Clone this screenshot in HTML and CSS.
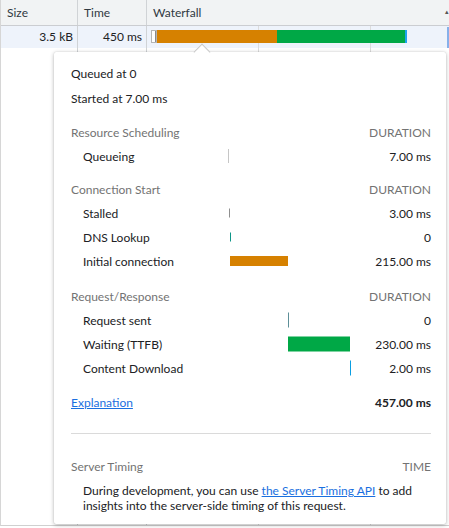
FILE: index.html
```html
<!DOCTYPE html>
<html>
<head>
<meta charset="utf-8">
<link rel="stylesheet" href="styles.css">
</head>
<body>
<div class="table">
  <div class="trow head">
    <div class="cell c-size">Size</div>
    <div class="cell c-time">Time</div>
    <div class="cell c-wf">Waterfall<span class="sort">▴</span></div>
  </div>
  <div class="trow data">
    <div class="cell c-size num">3.5 kB</div>
    <div class="cell c-time num">450 ms</div>
    <div class="cell c-wf lines">
      <div class="wf">
        <span class="wf-queue"></span>
        <span class="wf-conn"></span>
        <span class="wf-wait"></span>
        <span class="wf-dl"></span>
      </div>
      <span class="sel"></span>
    </div>
  </div>
  <div class="trow fill">
    <div class="cell c-size"></div>
    <div class="cell c-time"></div>
    <div class="cell c-wf lines"></div>
  </div>
</div>

<div class="popover">
  <span class="arrow"></span>
  <div class="meta">Queued at 0</div>
  <div class="meta">Started at 7.00 ms</div>

  <div class="timing sec">
    <div class="sh">Resource Scheduling</div><div></div><div class="sh r">DURATION</div>
    <div class="lbl">Queueing</div>
    <div class="bars"><span class="b b-queue" style="left:0;width:1px;height:14px"></span></div>
    <div class="dur">7.00 ms</div>
  </div>

  <div class="timing sec">
    <div class="sh">Connection Start</div><div></div><div class="sh r">DURATION</div>
    <div class="lbl">Stalled</div>
    <div class="bars"><span class="b b-stall" style="left:1px;width:1px;height:9px"></span></div>
    <div class="dur">3.00 ms</div>
    <div class="lbl">DNS Lookup</div>
    <div class="bars"><span class="b b-dns" style="left:2px;width:1px;height:9px"></span></div>
    <div class="dur">0</div>
    <div class="lbl">Initial connection</div>
    <div class="bars"><span class="b b-conn" style="left:2px;width:58px;height:10px"></span></div>
    <div class="dur">215.00 ms</div>
  </div>

  <div class="timing sec sec-rr">
    <div class="sh">Request/Response</div><div></div><div class="sh r">DURATION</div>
    <div class="lbl">Request sent</div>
    <div class="bars"><span class="b b-sent" style="left:60px;width:1px;height:15px"></span></div>
    <div class="dur">0</div>
    <div class="lbl">Waiting (TTFB)</div>
    <div class="bars"><span class="b b-wait" style="left:60px;width:62px;height:15px"></span></div>
    <div class="dur">230.00 ms</div>
    <div class="lbl">Content Download</div>
    <div class="bars"><span class="b b-dl" style="left:122px;width:1px;height:15px"></span></div>
    <div class="dur">2.00 ms</div>
  </div>

  <div class="total">
    <a href="#" class="link">Explanation</a>
    <span class="total-v">457.00 ms</span>
  </div>

  <div class="divider"></div>

  <div class="server">
    <div class="sh-row"><span class="sh">Server Timing</span><span class="sh">TIME</span></div>
    <p class="desc">During development, you can use <a href="#" class="link">the Server Timing API</a> to add insights into the server-side timing of this request.</p>
  </div>
</div>
</body>
</html>
```

FILE: styles.css
```css
* { box-sizing: border-box; }
html, body { margin: 0; padding: 0; }
body {
  width: 449px;
  height: 528px;
  overflow: hidden;
  font-family: Lato, "Open Sans", sans-serif;
  font-size: 12px;
  color: #202124;
  background: #fff;
  position: relative;
}
.table {
  display: flex;
  flex-direction: column;
  height: 526px;
  border-left: 1px solid #d6d6d6;
  border-bottom: 1px solid #d0d0d0;
}
.trow {
  display: grid;
  grid-template-columns: 77px 69px 1fr;
}
.cell {
  border-right: 1px solid #d0d3d6;
  white-space: nowrap;
  overflow: hidden;
}
.c-wf { border-right: none; position: relative; }
.head {
  height: 26px;
  background: #f1f3f4;
  border-bottom: 1px solid #cbcdd1;
}
.head .cell {
  line-height: 25px;
  padding-left: 6px;
  color: #303942;
}
.sort {
  position: absolute;
  right: 0;
  top: 7px;
  font-size: 7px;
  line-height: 8px;
  color: #555;
}
.data {
  height: 22px;
  background: #eef3fb;
}
.num {
  text-align: right;
  padding-right: 4px;
  line-height: 22px;
}
.fill { flex: 1; }
.lines {
  background-image:
    linear-gradient(to right, transparent 111px, #dcdcdc 111px, #dcdcdc 112px, transparent 112px),
    linear-gradient(to right, transparent 223px, #dcdcdc 223px, #dcdcdc 224px, transparent 224px);
}
.wf {
  display: flex;
  height: 13px;
  margin: 4px 0 0 4px;
}
.wf-queue {
  width: 6px;
  background: linear-gradient(to right, #fff 0 3px, #8a8a8a 3px);
  border: 1px solid #b5b5b5;
}
.wf-conn { width: 120px; background: #d68100; }
.wf-wait { width: 128px; background: #00a846; }
.wf-dl { width: 2px; background: #1ea4ec; }
.sel {
  position: absolute;
  right: 0;
  top: 1px;
  width: 2px;
  height: 21px;
  background: #86b0ea;
}

.popover {
  position: absolute;
  left: 54px;
  top: 52px;
  width: 392px;
  height: 472px;
  background: #fff;
  padding: 9px 15px 10px 17px;
  box-shadow: 0 1px 4px rgba(0,0,0,0.28), 0 0 1px rgba(0,0,0,0.2);
  border-radius: 2px;
}
.arrow {
  position: absolute;
  left: 142px;
  top: -6px;
  width: 12px;
  height: 12px;
  background: #fff;
  border-top: 1px solid #c8c8c8;
  border-left: 1px solid #c8c8c8;
  transform: rotate(45deg);
}
.meta { height: 25px; line-height: 25px; }
.timing {
  display: grid;
  grid-template-columns: 157px 123px 80px;
  grid-auto-rows: 24px;
  align-items: center;
}
.sec { margin-top: 9px; }
.sec-rr { margin-top: 11px; }
.sh { color: #737373; }
.r, .dur { text-align: right; }
.lbl { padding-left: 12px; }
.bars { position: relative; height: 24px; }
.b {
  position: absolute;
  top: 50%;
  transform: translateY(-50%);
}
.b-queue { background: #c6c6c6; }
.b-stall { background: #8f8f8f; }
.b-dns { background: #0e9688; }
.b-conn { background: #d68100; }
.b-sent { background: #5d8f98; }
.b-wait { background: #00a846; }
.b-dl { background: #0a9ee2; }
.total {
  margin-top: 10px;
  height: 24px;
  display: flex;
  justify-content: space-between;
  align-items: center;
}
.total-v { font-weight: 700; }
.link { color: #1a6fe0; text-decoration: underline; }
.divider {
  margin-top: 19px;
  height: 1px;
  background: #dadada;
}
.server { margin-top: 20px; }
.sh-row {
  display: flex;
  justify-content: space-between;
  height: 24px;
  align-items: center;
}
.desc {
  margin: 5px 0 0;
  padding-left: 12px;
  line-height: 15px;
}
```
